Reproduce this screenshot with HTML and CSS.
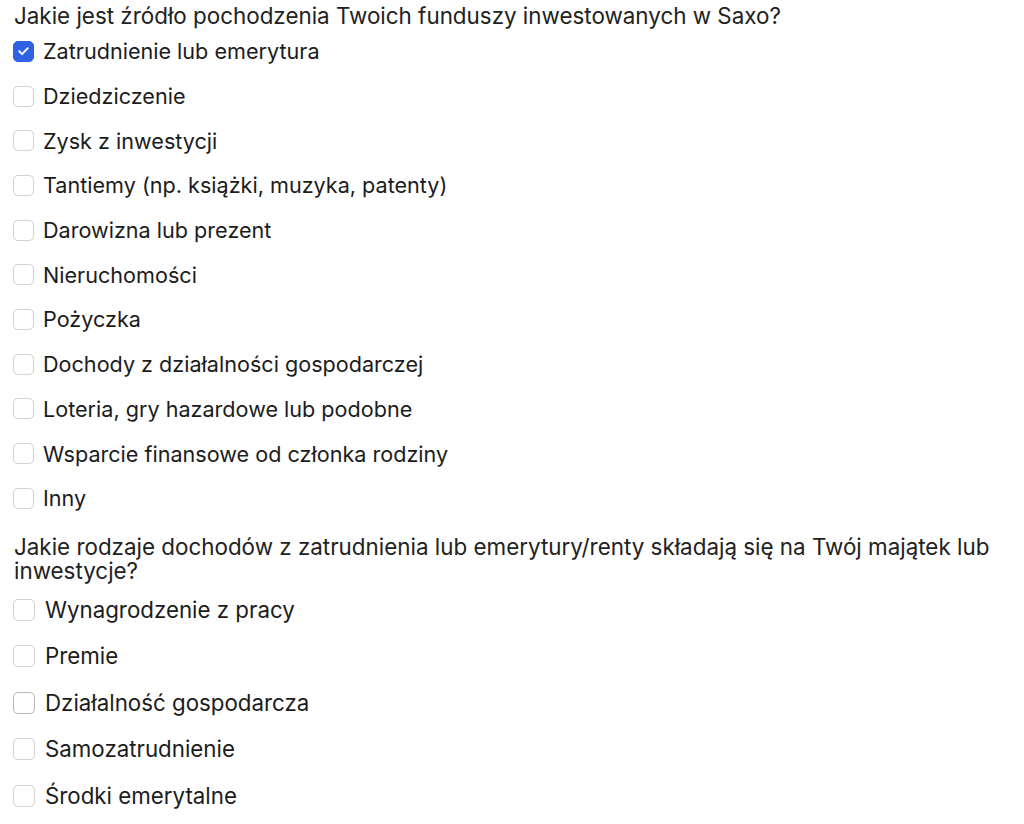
FILE: index.html
```html
<!DOCTYPE html>
<html lang="pl">
<head>
<meta charset="utf-8">
<link rel="stylesheet" href="styles.css">
</head>
<body>
<div class="page">
  <section class="group">
    <h2 class="question">Jakie jest źródło pochodzenia Twoich funduszy inwestowanych w Saxo?</h2>
    <ul class="options">
      <li class="option"><span class="box checked"><svg viewBox="0 0 20 20" width="20" height="20"><path d="M5.5 10.3l3 3 6-6.3" fill="none" stroke="#fff" stroke-width="2" stroke-linecap="round" stroke-linejoin="round"/></svg></span><span class="label">Zatrudnienie lub emerytura</span></li>
      <li class="option"><span class="box"></span><span class="label">Dziedziczenie</span></li>
      <li class="option"><span class="box"></span><span class="label">Zysk z inwestycji</span></li>
      <li class="option"><span class="box"></span><span class="label">Tantiemy (np. książki, muzyka, patenty)</span></li>
      <li class="option"><span class="box"></span><span class="label">Darowizna lub prezent</span></li>
      <li class="option"><span class="box"></span><span class="label">Nieruchomości</span></li>
      <li class="option"><span class="box"></span><span class="label">Pożyczka</span></li>
      <li class="option"><span class="box"></span><span class="label">Dochody z działalności gospodarczej</span></li>
      <li class="option"><span class="box"></span><span class="label">Loteria, gry hazardowe lub podobne</span></li>
      <li class="option"><span class="box"></span><span class="label">Wsparcie finansowe od członka rodziny</span></li>
      <li class="option"><span class="box"></span><span class="label">Inny</span></li>
    </ul>
  </section>
  <section class="group group2">
    <h2 class="question">Jakie rodzaje dochodów z zatrudnienia lub emerytury/renty składają się na Twój majątek lub inwestycje?</h2>
    <ul class="options">
      <li class="option"><span class="box"></span><span class="label">Wynagrodzenie z pracy</span></li>
      <li class="option"><span class="box"></span><span class="label">Premie</span></li>
      <li class="option"><span class="box hover"></span><span class="label">Działalność gospodarcza</span></li>
      <li class="option"><span class="box"></span><span class="label">Samozatrudnienie</span></li>
      <li class="option"><span class="box"></span><span class="label">Środki emerytalne</span></li>
    </ul>
  </section>
</div>
</body>
</html>
```

FILE: styles.css
```css
html, body {
  margin: 0;
  padding: 0;
  background: #ffffff;
}
body {
  font-family: Inter, "Noto Sans", sans-serif;
  color: #1c1c1c;
}
.page {
  padding: 0 14px;
  width: 1010px;
  box-sizing: border-box;
}
.question {
  margin: 0;
  font-size: 22.4px;
  font-weight: 400;
  line-height: 24px;
  color: #222;
  padding-top: 4px;
}
.options {
  list-style: none;
  margin: 0;
  padding: 0;
}
.option {
  display: flex;
  align-items: center;
  height: 44.7px;
  gap: 9px;
}
.group .options {
  margin-top: 1px;
}
.box {
  width: 21px;
  height: 21px;
  box-sizing: border-box;
  border: 1px solid #d3d3d3;
  border-radius: 5px;
  background: #fff;
  display: flex;
  align-items: center;
  justify-content: center;
  flex: none;
  margin-left: -1px;
  box-shadow: 0 0 1px rgba(0,0,0,0.08);
}
.box.checked {
  background: #2f62e3;
  border-color: #2f62e3;
}
.box.hover {
  border-color: #b8b8b8;
  border-width: 1.5px;
}
.label {
  font-size: 21.6px;
  line-height: 24px;
  color: #1c1c1c;
}
.group2 {
  margin-top: 14px;
}
.group2 .question {
  padding-top: 0;
}
.group2 .options {
  margin-top: 4px;
}
.group2 .option {
  height: 46.5px;
  gap: 10px;
}
.group2 .box {
  width: 22px;
  height: 22px;
}
.group2 .label {
  font-size: 22.3px;
}
```
